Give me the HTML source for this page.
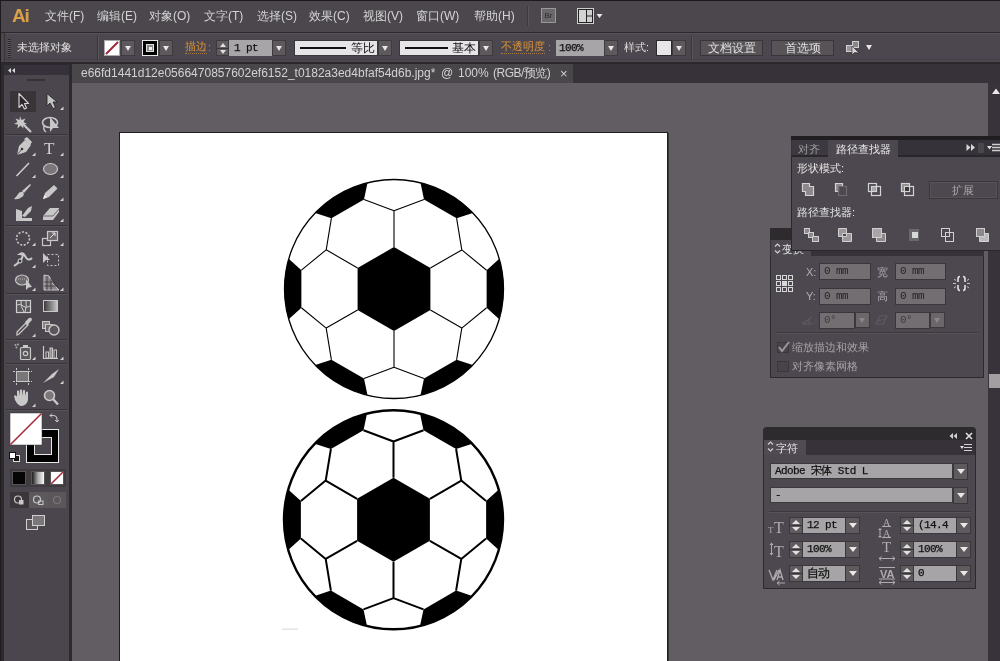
<!DOCTYPE html>
<html><head><meta charset="utf-8"><style>
*{margin:0;padding:0;box-sizing:border-box}
html,body{width:1000px;height:661px;overflow:hidden;}
body{will-change:transform;background:#4b474d;font-family:"Liberation Sans",sans-serif;}
.a{position:absolute}
#menubar{left:0;top:0;width:1000px;height:32px;background:#4b474d;border-top:1px solid #1c1b1c;}
#sep1{left:0;top:32px;width:1000px;height:1px;background:#2b292b}
#ctrl{left:4px;top:33px;width:996px;height:30px;background:#4c474e;border-left:1px solid #363336;box-shadow:inset 0 1px 0 #58535a, inset 0 -3px 0 #4c474e, inset 0 -4px 0 #433e45}
#sep2{left:0;top:62px;width:1000px;height:2px;background:#2c292c}
#tool{left:0;top:64px;width:72px;height:597px;background:#2d2a2d}
#toolin{left:4px;top:65px;width:65px;height:596px;background:#4b464d}
#toolhd{left:4px;top:65px;width:65px;height:10px;background:#36313a}
#tabs{left:72px;top:64px;width:928px;height:19px;background:#37323a}
#tab{left:72px;top:64px;width:501px;height:19px;background:#4a474a}
#canvas{left:72px;top:83px;width:916px;height:578px;background:#625d63}
#scroll{left:988px;top:83px;width:12px;height:578px;background:#38333b}
#thumb{left:989px;top:374px;width:11px;height:14px;background:#a29ea2}
#board{left:119px;top:132px;width:549px;height:540px;background:#fff;border:1px solid #1e1e1e;box-shadow:1px 1px 0 #3a373a}
.mt{color:#d4d4d4;font-size:12px;top:8px;white-space:nowrap}
#ai{left:12px;top:5px;font:bold 19px "Liberation Sans",sans-serif;color:#d9a04a;letter-spacing:-1.2px;line-height:22px}
#br{left:541px;top:8px;width:15px;height:15px;background:#6a686b;border:1px solid #9a989b;color:#2a292b;font:8px "Liberation Sans",sans-serif;line-height:13px;text-align:center}
#lay{left:577px;top:8px;width:17px;height:16px;border:1px solid #d8d8d8;background:#2e2d2f}
#lay i{position:absolute;background:#cfcfcf}
.tri{position:absolute;width:0;height:0;border-left:3.5px solid transparent;border-right:3.5px solid transparent;border-top:5px solid #e6e6e6}
.dd{width:14px;height:16px;background:#5d595d;border:1px solid #3e3b3e}
.dd .tri{left:2.5px;top:5px}
.ct{font-size:11px;white-space:nowrap;line-height:14px}
.or{color:#d8913c;border-bottom:1px dotted #a87a40;line-height:13px}
#grip{left:8px;top:39px;width:3px;height:19px;background:repeating-linear-gradient(#2a272a 0 1px,#5a565a 1px 2px)}
.vsep{top:36px;width:1px;height:24px;background:#3a373a;box-shadow:1px 0 0 #585458}
#fillsw{left:104px;top:40px;width:16px;height:16px;background:#fff;border:1px solid #aaa}
#fillsw svg{position:absolute;left:-1px;top:-1px}
#strokesw{left:142px;top:40px;width:16px;height:16px;background:#000;border:1px solid #e8e8e8}
#strokesw div{position:absolute;left:3px;top:3px;width:8px;height:8px;border:1px solid #e0e0e0;background:#8a8a8a}
#strokesw div:after{content:"";position:absolute;left:1.5px;top:1.5px;width:3px;height:3px;background:#f0f0f0}
.spin{width:13px;height:16px;background:#5f5b5f;border:1px solid #3e3b3e}
.spin .up{position:absolute;left:2.5px;top:2px;width:0;height:0;border-left:3.5px solid transparent;border-right:3.5px solid transparent;border-bottom:4px solid #e0e0e0}
.spin:after{content:"";position:absolute;left:0;top:6.5px;width:11px;height:1px;background:#3a363c}
.spin .dn{position:absolute;left:2.5px;top:9px;width:0;height:0;border-left:3.5px solid transparent;border-right:3.5px solid transparent;border-top:4px solid #e0e0e0}
.fld{-webkit-text-stroke:0.25px #111;height:16px;background:#a8a5a8;color:#111;font:11px "Liberation Mono",monospace;letter-spacing:-0.6px;line-height:16px;padding-left:5px;white-space:nowrap}
.sbox{top:40px;height:16px;background:#e6e4e6;border:1px solid #3a373a}
.sbox .ln{position:absolute;left:5px;top:6px;width:46px;height:2px;background:#111}
.sbox span{position:absolute;left:56px;top:0;font-size:12px;line-height:14px;color:#111}
.btn{top:40px;height:16px;background:#575357;border:1px solid #383538;color:#e0e0e0;font-size:12px;line-height:14px;text-align:center}
.tabt{top:66px;font-size:12px;color:#d2d2d2;white-space:nowrap;line-height:14px}
#tabx{left:560px;top:67px;font-size:13px;color:#d0d0d0;line-height:14px}
.pt{font-size:11px;line-height:14px;white-space:nowrap}
.pl{font-size:11px;line-height:14px;color:#b0adb0;white-space:nowrap}
.inp{height:17px;background:#726e72;border:1px solid #3a373a;color:#262426;font:11px "Liberation Mono",monospace;letter-spacing:-0.6px;line-height:15px;padding-left:4px;white-space:nowrap}
.inp.dis{color:#3e3b3e}
.ddp{width:15px;height:16px;background:#6a666a;border:1px solid #3c393c}
.ddp .tri{left:3px;top:5px;border-top-color:#8a868a}
.cb{width:12px;height:11px;background:#474347;border:1px solid #3a373a}
.finp{-webkit-text-stroke:0.25px #111;height:16px;background:#a7a4a7;border:1px solid #3c393c;color:#111;font:11px "Liberation Mono",monospace;letter-spacing:-0.6px;line-height:14px;padding-left:4px;white-space:nowrap}
.ddc{width:15px;height:17px;background:#5e5a5e;border:1px solid #3a373a}
.ddc .tri{left:3px;top:5px;border-left-width:4px;border-right-width:4px;border-top-width:5px;border-top-color:#e8e8e8}
.cinp{-webkit-text-stroke:0.25px #111;height:17px;background:#a7a4a7;border-top:1px solid #3c393c;border-bottom:1px solid #3c393c;color:#111;font:11px "Liberation Mono",monospace;letter-spacing:-0.6px;line-height:15px;padding-left:4px;white-space:nowrap}
.spn{width:14px;height:17px;background:#5e5a5e;border:1px solid #3a373a}
.spn:after{content:"";position:absolute;left:0;top:7px;width:12px;height:1px;background:#3a373a}
.spn i{position:absolute;left:2px;width:0;height:0;border-left:4px solid transparent;border-right:4px solid transparent}
.spn .u{top:2px;border-bottom:4px solid #e0e0e0}
.spn .d{top:9px;border-top:4px solid #e0e0e0}

#frame{left:0;top:0;width:1px;height:661px;background:#1e1c1e}

</style></head><body>
<div class="a" id="menubar"></div>
<div class="a" id="sep1"></div>
<div class="a" id="ctrl"></div>
<div class="a" id="sep2"></div>
<div class="a" id="tool"></div>
<div class="a" id="toolin"></div>
<div class="a" id="toolhd"></div>
<div class="a" id="tabs"></div>
<div class="a" id="tab"></div>
<div class="a" id="canvas"></div>
<div class="a" id="scroll"></div>
<div class="a" id="thumb"></div>
<div class="a" id="board"></div>
<svg class="a" style="left:0;top:0" width="1000" height="661" viewBox="0 0 1000 661">
<circle cx="394" cy="289" r="109.5" fill="#fff" stroke="#000" stroke-width="1.3"/>
<polygon points="394.0,247.0 430.4,268.0 430.4,310.0 394.0,331.0 357.6,310.0 357.6,268.0" fill="#000"/>
<path d="M331.4,218.2 L364.0,199.4 L367.5,182.8 A109.5,109.5 0 0 0 315.2,212.9 Z" fill="#000"/>
<path d="M424.0,199.4 L456.6,218.2 L472.8,212.9 A109.5,109.5 0 0 0 420.5,182.8 Z" fill="#000"/>
<path d="M486.6,270.2 L486.6,307.8 L499.3,319.2 A109.5,109.5 0 0 0 499.3,258.8 Z" fill="#000"/>
<path d="M456.6,359.8 L424.0,378.6 L420.5,395.2 A109.5,109.5 0 0 0 472.8,365.1 Z" fill="#000"/>
<path d="M364.0,378.6 L331.4,359.8 L315.2,365.1 A109.5,109.5 0 0 0 367.5,395.2 Z" fill="#000"/>
<path d="M301.4,307.8 L301.4,270.2 L288.7,258.8 A109.5,109.5 0 0 0 288.7,319.2 Z" fill="#000"/>
<path d="M394.0,247.0L394.0,210.7 M394.0,210.7L364.0,199.4 M394.0,210.7L424.0,199.4 M430.4,268.0L461.8,249.9 M461.8,249.9L456.6,218.2 M461.8,249.9L486.6,270.2 M430.4,310.0L461.8,328.1 M461.8,328.1L486.6,307.8 M461.8,328.1L456.6,359.8 M394.0,331.0L394.0,367.3 M394.0,367.3L424.0,378.6 M394.0,367.3L364.0,378.6 M357.6,310.0L326.2,328.1 M326.2,328.1L331.4,359.8 M326.2,328.1L301.4,307.8 M357.6,268.0L326.2,249.8 M326.2,249.8L301.4,270.2 M326.2,249.8L331.4,218.2" stroke="#000" stroke-width="1.1" fill="none"/>
<circle cx="393.5" cy="519.8" r="109.5" fill="#fff" stroke="#000" stroke-width="2.4"/>
<polygon points="393.5,477.8 429.9,498.8 429.9,540.8 393.5,561.8 357.1,540.8 357.1,498.8" fill="#000"/>
<path d="M330.9,449.0 L363.5,430.2 L367.0,413.6 A109.5,109.5 0 0 0 314.7,443.7 Z" fill="#000"/>
<path d="M423.5,430.2 L456.1,449.0 L472.3,443.7 A109.5,109.5 0 0 0 420.0,413.6 Z" fill="#000"/>
<path d="M486.1,501.0 L486.1,538.6 L498.8,550.0 A109.5,109.5 0 0 0 498.8,489.6 Z" fill="#000"/>
<path d="M456.1,590.6 L423.5,609.4 L420.0,626.0 A109.5,109.5 0 0 0 472.3,595.9 Z" fill="#000"/>
<path d="M363.5,609.4 L330.9,590.6 L314.7,595.9 A109.5,109.5 0 0 0 367.0,626.0 Z" fill="#000"/>
<path d="M300.9,538.6 L300.9,501.0 L288.2,489.6 A109.5,109.5 0 0 0 288.2,550.0 Z" fill="#000"/>
<path d="M393.5,477.8L393.5,441.5 M393.5,441.5L363.5,430.2 M393.5,441.5L423.5,430.2 M429.9,498.8L461.3,480.6 M461.3,480.6L456.1,449.0 M461.3,480.6L486.1,501.0 M429.9,540.8L461.3,558.9 M461.3,558.9L486.1,538.6 M461.3,558.9L456.1,590.6 M393.5,561.8L393.5,598.1 M393.5,598.1L423.5,609.4 M393.5,598.1L363.5,609.4 M357.1,540.8L325.7,558.9 M325.7,558.9L330.9,590.6 M325.7,558.9L300.9,538.6 M357.1,498.8L325.7,480.6 M325.7,480.6L300.9,501.0 M325.7,480.6L330.9,449.0" stroke="#000" stroke-width="2" fill="none"/>
<rect x="282" y="628.5" width="16" height="1.5" fill="#e4e4e4"/>
</svg>
<svg class="a" style="left:0;top:0" width="72" height="661" viewBox="0 0 72 661">
<g fill="none" stroke="#37323a" stroke-width="1">
<line x1="6" y1="134.5" x2="67" y2="134.5"/><line x1="6" y1="225.5" x2="67" y2="225.5"/><line x1="6" y1="293.5" x2="67" y2="293.5"/>
<line x1="6" y1="339.5" x2="67" y2="339.5"/><line x1="6" y1="363.5" x2="67" y2="363.5"/><line x1="6" y1="409.5" x2="67" y2="409.5"/>
</g>
<g fill="none" stroke="#555155" stroke-width="1">
<line x1="6" y1="135.5" x2="67" y2="135.5"/><line x1="6" y1="226.5" x2="67" y2="226.5"/><line x1="6" y1="294.5" x2="67" y2="294.5"/>
<line x1="6" y1="340.5" x2="67" y2="340.5"/><line x1="6" y1="364.5" x2="67" y2="364.5"/><line x1="6" y1="410.5" x2="67" y2="410.5"/>
</g>
<!-- header arrows -->
<path d="M8 70.5 L11 68 L11 73 Z M12 70.5 L15 68 L15 73 Z" fill="#d8d8d8"/>
<rect x="27" y="79" width="18" height="2" fill="#2a272a"/><path d="M28 79 V81 M30 79 V81 M32 79 V81 M34 79 V81 M36 79 V81 M38 79 V81 M40 79 V81 M42 79 V81 M44 79 V81" stroke="#48434a" stroke-width="0.8"/>
<!-- selected bg -->
<rect x="10" y="91" width="26" height="21" fill="#383438"/>
<!-- selection arrow outline -->
<path d="M19 93.5 L19 107.5 L22 104.5 L24.5 109 L26.5 108 L24.5 103.5 L28.5 103.5 Z" fill="#2a262a" stroke="#cfcfcf" stroke-width="1.2" stroke-linejoin="round"/>
<!-- direct selection -->
<path d="M47 93.5 L47 106 L50 103 L53 108.5 L55.5 107.5 L53 102 L57 102 Z" fill="#c4c4c4" stroke="#222" stroke-width="0.8"/>
<g fill="#d0d0d0">
<path d="M60 110 L63.5 106.5 L63.5 110 Z"/>
<path d="M32 156 L35.5 152.5 L35.5 156 Z"/><path d="M60 156 L63.5 152.5 L63.5 156 Z"/>
<path d="M32 178 L35.5 174.5 L35.5 178 Z"/><path d="M60 178 L63.5 174.5 L63.5 178 Z"/>
<path d="M60 201 L63.5 197.5 L63.5 201 Z"/>
<path d="M60 222 L63.5 218.5 L63.5 222 Z"/>
<path d="M32 246 L35.5 242.5 L35.5 246 Z"/><path d="M60 246 L63.5 242.5 L63.5 246 Z"/>
<path d="M32 268 L35.5 264.5 L35.5 268 Z"/>
<path d="M32 291 L35.5 287.5 L35.5 291 Z"/><path d="M60 291 L63.5 287.5 L63.5 291 Z"/>
<path d="M32 337 L35.5 333.5 L35.5 337 Z"/>
<path d="M32 360 L35.5 356.5 L35.5 360 Z"/><path d="M60 360 L63.5 356.5 L63.5 360 Z"/>
<path d="M60 384 L63.5 380.5 L63.5 384 Z"/>
<path d="M32 407 L35.5 403.5 L35.5 407 Z"/>
</g>
<!-- magic wand -->
<path d="M20 116 L21.5 120 L25.5 118.5 L23.5 122 L27 124 L23 124.5 L23.5 128.5 L20.5 125.5 L17.5 128.5 L18 124.5 L14 124 L17.5 122 L15.5 118.5 L19.5 120 Z" fill="#c8c8c8"/>
<line x1="22" y1="123" x2="31" y2="132" stroke="#c8c8c8" stroke-width="2.2"/>
<!-- lasso -->
<ellipse cx="50" cy="122.5" rx="7.5" ry="5" fill="none" stroke="#c8c8c8" stroke-width="1.6"/>
<path d="M50 117 L50 132 L53 128 L59 128 Z" fill="#c8c8c8"/>
<path d="M44 126 Q43 130 46 132" fill="none" stroke="#c8c8c8" stroke-width="1.4"/>
<!-- pen -->
<path d="M17 155 L19 146 L25 140 L31 145 L26 152 Z" fill="#c8c8c8"/>
<path d="M24 139 L27 137 L32 142 L30 145 Z" fill="#c8c8c8"/>
<circle cx="22" cy="149" r="1.3" fill="#3a363a"/><line x1="17" y1="155" x2="22" y2="149" stroke="#3a363a" stroke-width="0.8"/>
<!-- type T -->
<text x="44" y="154" font-family="Liberation Serif" font-size="17" fill="#cfcfcf">T</text>
<!-- line -->
<line x1="16.5" y1="176" x2="29" y2="163" stroke="#cfcfcf" stroke-width="1.5"/>
<!-- ellipse -->
<ellipse cx="50.5" cy="169" rx="7" ry="5.5" fill="#7a767a" stroke="#c8c8c8" stroke-width="1.2"/>
<!-- brush -->
<path d="M22 191 L30 184 L31 185 L24 193 Z" fill="#c8c8c8"/>
<path d="M14 199 Q17 196 18 194 Q20 191 23 192 Q25 195 22 197 Q18 200 14 199 Z" fill="#c8c8c8"/>
<!-- pencil -->
<path d="M43 199 L45 193 L54 185 L57.5 188.5 L49 197 Z" fill="#c8c8c8"/><path d="M43 199 L44.5 195 L47 197.5 Z" fill="#eee"/>
<!-- blob brush -->
<path d="M16 209 L22 211 L22 218 L32 218 L32 221 L16 221 Z" fill="#c8c8c8"/>
<path d="M22 216 L28 208 L32 206 L31 211 L25 217 Z" fill="#c8c8c8"/>
<!-- eraser -->
<path d="M43 216 L50 208 L59 208 L59 212 L53 220 L43 220 Z" fill="#c8c8c8"/><path d="M43 216 L53 216 L59 209" fill="none" stroke="#6a666a" stroke-width="1"/>
<!-- rotate -->
<circle cx="23" cy="238.5" r="6.5" fill="none" stroke="#c8c8c8" stroke-width="1.6" stroke-dasharray="2 1.6"/>
<!-- scale -->
<rect x="42.5" y="238.5" width="8" height="7" fill="none" stroke="#c8c8c8" stroke-width="1.2"/>
<rect x="47.5" y="231.5" width="10" height="9" fill="#6a666a" stroke="#c8c8c8" stroke-width="1.2"/>
<path d="M50 238 L55 233 M52 233 L55 233 L55 236" stroke="#e0e0e0" stroke-width="1" fill="none"/>
<!-- warp -->
<path d="M14 266 Q20 262 22 258 Q24 254 20 254 Q23 252 25 256 Q28 262 32 258" fill="none" stroke="#c8c8c8" stroke-width="2"/>
<circle cx="20" cy="261" r="2" fill="#3a363a" stroke="#e0e0e0" stroke-width="1"/>
<!-- free transform -->
<rect x="47.5" y="254.5" width="11" height="11" fill="none" stroke="#c8c8c8" stroke-width="1" stroke-dasharray="2 2"/>
<path d="M43 253 L43 263 L46 260 L50 260 Z" fill="#c8c8c8"/>
<!-- shape builder -->
<ellipse cx="22" cy="280" rx="6.5" ry="5" fill="#6c686c" stroke="#c8c8c8" stroke-width="1.2"/>
<path d="M26 279 L26 290 L28.5 287.5 L32 287 Z" fill="#c8c8c8"/>
<line x1="16" y1="279" x2="25" y2="279" stroke="#c8c8c8" stroke-width="0.8" stroke-dasharray="1 1"/>
<!-- perspective grid -->
<path d="M44 275 L44 290 L59 290 Q52 285 49 276 Z" fill="#8a868a" stroke="#c8c8c8" stroke-width="1"/>
<path d="M47 276 L47 290 M51 279 L51 290 M44 282 L55 282 M44 286 L58 286" stroke="#3a363a" stroke-width="0.8"/>
<!-- mesh -->
<rect x="16.5" y="300.5" width="14" height="12" fill="#5a565a" stroke="#d0d0d0" stroke-width="1.2"/>
<path d="M17 305 Q21 303 23 306 Q26 309 30 306 M21 301 Q20 306 24 312 M26 301 Q27 306 25 312" fill="none" stroke="#d0d0d0" stroke-width="1"/>
<!-- gradient -->
<defs><linearGradient id="gr" x1="0" x2="1"><stop offset="0" stop-color="#3a373a"/><stop offset="1" stop-color="#c8c8c8"/></linearGradient>
<linearGradient id="gr2" x1="0" x2="1"><stop offset="0" stop-color="#111"/><stop offset="0.5" stop-color="#aaa"/><stop offset="1" stop-color="#fff"/></linearGradient></defs>
<rect x="43.5" y="300.5" width="14" height="11" fill="url(#gr)" stroke="#c8c8c8" stroke-width="1"/>
<!-- eyedropper -->
<path d="M17 335 L17 332 L26 323 L28 325 L19 334 Z" fill="none" stroke="#c8c8c8" stroke-width="1.3"/>
<path d="M25 322 L29 318 Q31 317 32 319 Q32 321 30 322 L27 326 Z" fill="#c8c8c8"/>
<!-- blend -->
<rect x="42.5" y="321.5" width="7" height="7" fill="#8a868a" stroke="#c8c8c8" stroke-width="1"/>
<rect x="45.5" y="324.5" width="7" height="7" fill="#6a666a" stroke="#c8c8c8" stroke-width="1"/>
<circle cx="54" cy="330" r="5" fill="#5a565a" stroke="#c8c8c8" stroke-width="1.4"/>
<!-- symbol sprayer -->
<rect x="20.5" y="347.5" width="10" height="12" rx="1" fill="#5a565a" stroke="#c8c8c8" stroke-width="1.2"/>
<rect x="23" y="345" width="5" height="3" fill="#c8c8c8"/><circle cx="25.5" cy="353.5" r="2.2" fill="none" stroke="#c8c8c8" stroke-width="1.2"/>
<circle cx="15.5" cy="345" r="1" fill="#aaa"/><circle cx="18" cy="344.5" r="1" fill="#aaa"/><circle cx="16.5" cy="347.5" r="1" fill="#aaa"/>
<!-- graph -->
<path d="M43.5 346 L43.5 358.5 L58 358.5" fill="none" stroke="#c8c8c8" stroke-width="1.2"/>
<rect x="46" y="352" width="2.5" height="6" fill="none" stroke="#c8c8c8" stroke-width="1"/><rect x="50" y="348" width="2.5" height="10" fill="#8a868a" stroke="#c8c8c8" stroke-width="1"/><rect x="54" y="350" width="2.5" height="8" fill="none" stroke="#c8c8c8" stroke-width="1"/>
<!-- artboard -->
<rect x="16.5" y="371.5" width="12" height="10" fill="#7a767a" stroke="#c8c8c8" stroke-width="1"/>
<path d="M13 371.5 H32 M13 381.5 H32 M16.5 368 V385 M28.5 368 V385" stroke="#c8c8c8" stroke-width="1" stroke-dasharray="2 1"/>
<!-- slice -->
<path d="M43 383 L52 374 L59 369 L54 377 Z" fill="#c8c8c8"/>
<!-- hand -->
<path d="M17 397 L17 391 Q18 389.5 19 391 L19 396 L20 390 Q21 388.5 22 390 L22 396 L23 390.5 Q24 389 25 390.5 L25 396 L26 392 Q27 391 28 392 L28 400 Q27 405 22 406 Q18 406 15 400 L14 396 Q15 394.5 16.5 396 Z" fill="#c8c8c8"/>
<!-- zoom -->
<circle cx="49.5" cy="395.5" r="5" fill="#7a767a" stroke="#c8c8c8" stroke-width="1.6"/>
<line x1="53" y1="399" x2="58" y2="404.5" stroke="#c8c8c8" stroke-width="2.4"/>
<!-- fill / stroke -->
<rect x="26.5" y="429.5" width="32" height="33" fill="#000" stroke="#e8e8e8" stroke-width="1"/>
<rect x="34.5" y="437.5" width="17" height="17" fill="#4b464d" stroke="#e8e8e8" stroke-width="1"/>
<rect x="10" y="413" width="32" height="32" fill="#fff" stroke="#3a363a" stroke-width="0.5"/>
<line x1="10.5" y1="444.5" x2="41.5" y2="413.5" stroke="#a82c3c" stroke-width="1.6"/>
<path d="M50 415.5 L53 415.5 Q57 415.5 57 419.5 L57 422" fill="none" stroke="#c8c8c8" stroke-width="1.1"/>
<path d="M50 415.5 L52 413.5 M50 415.5 L52 417.5 M57 422 L55 420 M57 422 L59 420" stroke="#c8c8c8" stroke-width="1"/>
<rect x="13.5" y="455.5" width="6" height="6" fill="#111" stroke="#ddd" stroke-width="1"/>
<rect x="9.5" y="452.5" width="6" height="6" fill="#fff" stroke="#111" stroke-width="1"/>
<!-- color/gradient/none -->
<rect x="10" y="469" width="56" height="18" fill="#3f3b3f"/>
<rect x="12.5" y="471.5" width="13" height="13" fill="#050505" stroke="#555" stroke-width="1"/>
<rect x="31.5" y="471.5" width="13" height="13" fill="url(#gr2)" stroke="#555" stroke-width="1"/>
<rect x="50.5" y="471.5" width="13" height="13" fill="#fff" stroke="#555" stroke-width="1"/>
<line x1="51" y1="484" x2="63" y2="472" stroke="#a82c3c" stroke-width="1.6"/>
<!-- draw modes -->
<rect x="10" y="492" width="19" height="16" fill="#3a363a"/>
<rect x="29" y="492" width="19" height="16" fill="#5c585c"/>
<rect x="48" y="492" width="18" height="16" fill="#5a565a"/>
<circle cx="18" cy="499.5" r="3.5" fill="none" stroke="#c8c8c8" stroke-width="1.2"/><rect x="19" y="500" width="4.5" height="4.5" fill="#c8c8c8"/>
<circle cx="37" cy="499.5" r="3.5" fill="none" stroke="#c8c8c8" stroke-width="1.2"/><rect x="38.5" y="501" width="4.5" height="3.5" fill="none" stroke="#c8c8c8" stroke-width="1"/>
<circle cx="57" cy="500" r="3.5" fill="none" stroke="#7a767a" stroke-width="1.2"/>
<!-- screen mode -->
<rect x="26.5" y="519.5" width="11" height="10" fill="#5a565a" stroke="#d0d0d0" stroke-width="1"/>
<rect x="32.5" y="515.5" width="12" height="10" fill="#7a767a" stroke="#d0d0d0" stroke-width="1"/>
</svg>

<!-- Transform panel (P2) -->
<div class="a" style="left:770px;top:228px;width:214px;height:150px;background:#4d484f;border:1px solid #2c292c"></div>
<div class="a" style="left:770px;top:228px;width:214px;height:12px;background:#2e2b2e"></div>
<div class="a" style="left:770px;top:240px;width:214px;height:16px;background:#37323a"></div>
<div class="a" style="left:771px;top:240px;width:40px;height:16px;background:#4d484f"></div>
<svg class="a" style="left:770px;top:228px" width="214" height="150">
<path d="M5 18.5 L7.5 16 L10 18.5 M5 22.5 L7.5 25 L10 22.5" fill="none" stroke="#d0d0d0" stroke-width="1.2"/>
</svg>
<div class="a pt" style="left:782px;top:242px;color:#e0e0e0">变换</div>
<svg class="a" style="left:775px;top:274px" width="20" height="20">
<g fill="none" stroke="#d8d8d8" stroke-width="1"><rect x="1.5" y="1.5" width="4" height="4"/><rect x="7.5" y="1.5" width="4" height="4"/><rect x="13.5" y="1.5" width="4" height="4"/>
<rect x="1.5" y="7.5" width="4" height="4"/><rect x="13.5" y="7.5" width="4" height="4"/>
<rect x="1.5" y="13.5" width="4" height="4"/><rect x="7.5" y="13.5" width="4" height="4"/><rect x="13.5" y="13.5" width="4" height="4"/></g>
<rect x="7" y="7" width="5" height="5" fill="#d8d8d8"/>
</svg>
<div class="a pl" style="left:806px;top:265px">X:</div>
<div class="a inp" style="left:819px;top:263px;width:52px">0 mm</div>
<div class="a pl" style="left:877px;top:265px">宽</div>
<div class="a inp" style="left:895px;top:263px;width:51px">0 mm</div>
<div class="a pl" style="left:806px;top:289px">Y:</div>
<div class="a inp" style="left:819px;top:288px;width:52px">0 mm</div>
<div class="a pl" style="left:877px;top:289px">高</div>
<div class="a inp" style="left:895px;top:288px;width:51px">0 mm</div>
<svg class="a" style="left:953px;top:275px" width="18" height="17">
<path d="M7 1.5 Q5 1.5 5 4 L5 7 M7 15.5 Q5 15.5 5 13 L5 10 M10 1.5 Q12 1.5 12 4 L12 7 M10 15.5 Q12 15.5 12 13 L12 10" fill="none" stroke="#e0e0e0" stroke-width="1.6"/>
<path d="M0 8.5 H3 M14 8.5 H17 M1 4 L3 5.5 M16 4 L14 5.5 M1 13 L3 11.5 M16 13 L14 11.5" stroke="#c0c0c0" stroke-width="1"/>
</svg>
<svg class="a" style="left:800px;top:313px" width="20" height="14"><path d="M2 11 L12 4 M2 11 L13 11 M8 8 Q10 9 9 11" fill="none" stroke="#5e5a5e" stroke-width="1.2"/><circle cx="16" cy="7" r="0.8" fill="#5e5a5e"/><circle cx="16" cy="10" r="0.8" fill="#5e5a5e"/></svg>
<div class="a inp dis" style="left:819px;top:312px;width:36px">0°</div>
<div class="a ddp" style="left:855px;top:312px"><div class="tri"></div></div>
<svg class="a" style="left:873px;top:313px" width="20" height="14"><path d="M3 11 L7 3 L14 3 L10 11 Z M5 8 L12 6" fill="none" stroke="#5e5a5e" stroke-width="1.2"/></svg>
<div class="a inp dis" style="left:895px;top:312px;width:35px">0°</div>
<div class="a ddp" style="left:930px;top:312px"><div class="tri"></div></div>
<div class="a" style="left:776px;top:332px;width:202px;height:1px;background:#3c393c"></div>
<div class="a" style="left:776px;top:333px;width:202px;height:1px;background:#575357"></div>
<div class="a cb" style="left:777px;top:342px"></div>
<svg class="a" style="left:777px;top:340px" width="14" height="14"><path d="M2 7 L5 11 L12 2" fill="none" stroke="#9a969a" stroke-width="2"/></svg>
<div class="a pt" style="left:792px;top:340px;color:#a6a3a6">缩放描边和效果</div>
<div class="a cb" style="left:777px;top:361px"></div>
<div class="a pt" style="left:792px;top:359px;color:#a6a3a6">对齐像素网格</div>

<!-- Pathfinder panel (P1) -->
<div class="a" style="left:791px;top:136px;width:209px;height:115px;background:#4d484f;border-left:1px solid #2a272a;border-bottom:1px solid #2a272a"></div>
<div class="a" style="left:791px;top:136px;width:209px;height:4px;background:#201e21"></div>
<div class="a" style="left:791px;top:140px;width:209px;height:15px;background:#36323a"></div>
<div class="a" style="left:791px;top:155px;width:209px;height:2px;background:#2a272b"></div>
<div class="a" style="left:792px;top:140px;width:36px;height:15px;background:#3d3940"></div>
<div class="a" style="left:828px;top:140px;width:70px;height:17px;background:#4d484f"></div>
<div class="a pt" style="left:798px;top:142px;color:#9e9b9e">对齐</div>
<div class="a pt" style="left:836px;top:142px;color:#e8e8e8">路径查找器</div>
<svg class="a" style="left:960px;top:140px" width="40" height="17">
<path d="M6.5 4 L10.5 7.5 L6.5 11 Z M11 4 L15 7.5 L11 11 Z" fill="#d8d8d8"/>
<rect x="18" y="3" width="6" height="10" fill="#4a474b"/>
<path d="M27 6 L32 6 L29.5 9.5 Z" fill="#e0e0e0"/>
<path d="M32 4.5 H40 M32 7.5 H40 M32 10.5 H40" stroke="#cfcfcf" stroke-width="1.4"/>
</svg>
<div class="a pt" style="left:797px;top:161px;color:#e4e4e4">形状模式:</div>
<div class="a pt" style="left:797px;top:205px;color:#e4e4e4">路径查找器:</div>
<svg class="a" style="left:791px;top:157px" width="209" height="94">
<g stroke="#d4d4d4" stroke-width="1.2">
<!-- unite -->
<path d="M11.5 26.5 H18.5 V29.5 H22.5 V38.5 H14.5 V34.5 H11.5 Z" fill="#8c888c"/>
<!-- minus front -->
<path d="M44.5 26.5 H51.5 V29.5 H47.5 V34.5 H44.5 Z" fill="#8c888c"/>
<path d="M47.5 29.5 H55.5 V38.5 H47.5 Z" fill="none" stroke="#6e6a6e"/>
<!-- intersect -->
<rect x="77.5" y="26.5" width="8" height="8" fill="none"/><rect x="80.5" y="29.5" width="9" height="9" fill="none"/>
<rect x="81" y="30" width="4" height="4" fill="#a8a4a8" stroke="none"/>
<!-- exclude -->
<rect x="110.5" y="26.5" width="8" height="8" fill="#8c888c"/><rect x="113.5" y="29.5" width="9" height="9" fill="none"/>
<rect x="114" y="30" width="4" height="4" fill="#3c393c" stroke="none"/>
</g>
<g stroke="#d0d0d0" stroke-width="1">
<!-- divide -->
<rect x="13.5" y="71.5" width="5" height="5" fill="#8c888c"/><rect x="17.5" y="75.5" width="5" height="5" fill="#8c888c"/><rect x="21.5" y="79.5" width="6" height="5" fill="#8c888c"/>
<!-- trim -->
<path d="M47.5 71.5 H55.5 V76.5 H51.5 V79.5 H47.5 Z" fill="#9c989c"/><path d="M55.5 76.5 H60.5 V84.5 H51.5 V79.5 H55.5 Z" fill="#9c989c"/>
<!-- merge -->
<rect x="81.5" y="71.5" width="9" height="9" fill="#a8a4a8"/><path d="M90.5 76.5 H94.5 V84.5 H85.5 V80.5 H90.5 Z" fill="#8c888c"/>
<!-- crop -->
<rect x="118" y="72" width="10" height="12" fill="#6a666a" stroke="none"/><rect x="121" y="75" width="6" height="6" fill="#d8d8d8" stroke="none"/>
<!-- outline -->
<rect x="150.5" y="71.5" width="8" height="8" fill="none"/><rect x="154.5" y="75.5" width="8" height="9" fill="none"/>
<!-- minus back -->
<rect x="185.5" y="71.5" width="8" height="8" fill="#8c888c"/><path d="M193.5 76.5 H197.5 V84.5 H188.5 V79.5 H193.5 Z" fill="#bcb8bc"/>
</g>
</svg>
<div class="a" style="left:929px;top:181px;width:69px;height:18px;border:1px solid #3a373a;background:#4d484f;box-shadow:inset 0 0 0 1px #575357"></div>
<div class="a pt" style="left:952px;top:183px;color:#a9a6a9">扩展</div>

<!-- Character panel (P3) -->
<div class="a" style="left:763px;top:427px;width:213px;height:162px;background:#4d484f;border:1px solid #2c292c;border-radius:4px 4px 0 0"></div>
<div class="a" style="left:763px;top:427px;width:213px;height:13px;background:#2e2b2e;border-radius:4px 4px 0 0"></div>
<div class="a" style="left:764px;top:440px;width:211px;height:15px;background:#37323a"></div>
<div class="a" style="left:764px;top:440px;width:42px;height:15px;background:#504b52"></div>
<svg class="a" style="left:763px;top:427px" width="213" height="30">
<path d="M5 17.5 L7.5 15 L10 17.5 M5 21.5 L7.5 24 L10 21.5" fill="none" stroke="#d0d0d0" stroke-width="1.2"/>
<path d="M190 6 L186.5 9 L190 12 Z M194 6 L190.5 9 L194 12 Z" fill="#d0d0d0"/>
<path d="M203 6 L209 12 M209 6 L203 12" stroke="#e0e0e0" stroke-width="1.6"/>
<path d="M197 19 L201 19 L199 22 Z" fill="#e0e0e0"/>
<path d="M201 17.5 H209 M201 20.5 H209 M201 23.5 H209" stroke="#d0d0d0" stroke-width="1.2"/>
</svg>
<div class="a pt" style="left:776px;top:441px;color:#e8e8e8">字符</div>
<div class="a finp" style="left:770px;top:463px;width:183px;">Adobe 宋体 Std L</div>
<div class="a ddc" style="left:953px;top:463px"><div class="tri"></div></div>
<div class="a finp" style="left:770px;top:487px;width:183px">-</div>
<div class="a ddc" style="left:953px;top:487px"><div class="tri"></div></div>
<div class="a" style="left:769px;top:511px;width:202px;height:1px;background:#3c393c"></div>
<div class="a" style="left:769px;top:512px;width:202px;height:1px;background:#575357"></div>
<!-- rows -->
<div class="a spn" style="left:789px;top:517px"><i class="u"></i><i class="d"></i></div>
<div class="a cinp" style="left:803px;top:517px;width:42px">12 pt</div>
<div class="a ddc" style="left:845px;top:517px"><div class="tri"></div></div>
<div class="a spn" style="left:789px;top:541px"><i class="u"></i><i class="d"></i></div>
<div class="a cinp" style="left:803px;top:541px;width:42px">100%</div>
<div class="a ddc" style="left:845px;top:541px"><div class="tri"></div></div>
<div class="a spn" style="left:789px;top:565px"><i class="u"></i><i class="d"></i></div>
<div class="a cinp" style="left:803px;top:565px;width:42px;font-family:'Liberation Sans',sans-serif;font-size:12px">自动</div>
<div class="a ddc" style="left:845px;top:565px"><div class="tri"></div></div>
<div class="a spn" style="left:900px;top:517px"><i class="u"></i><i class="d"></i></div>
<div class="a cinp" style="left:914px;top:517px;width:42px">(14.4</div>
<div class="a ddc" style="left:956px;top:517px"><div class="tri"></div></div>
<div class="a spn" style="left:900px;top:541px"><i class="u"></i><i class="d"></i></div>
<div class="a cinp" style="left:914px;top:541px;width:42px">100%</div>
<div class="a ddc" style="left:956px;top:541px"><div class="tri"></div></div>
<div class="a spn" style="left:900px;top:565px"><i class="u"></i><i class="d"></i></div>
<div class="a cinp" style="left:914px;top:565px;width:42px">0</div>
<div class="a ddc" style="left:956px;top:565px"><div class="tri"></div></div>
<svg class="a" style="left:763px;top:512px" width="213" height="76">
<g fill="#aeabae" font-family="Liberation Serif">
<text x="11" y="20.5" font-size="16">T</text><text x="5" y="20.5" font-size="9">T</text>
<text x="11" y="45" font-size="16">T</text>
<path d="M6.5 33 L8.5 30.5 L10.5 33 Z M6.5 41 L8.5 43.5 L10.5 41 Z"/><rect x="8" y="32" width="1" height="10"/>
<path d="M6 58 L10 68 L14 58 M11 68 L16 58 M14 68 L17 58 L20 68 M15 65 L19 65" fill="none" stroke="#aeabae" stroke-width="1.3"/>
<path d="M14 71 H22 M14 71 L16.5 69 M14 71 L16.5 73" stroke="#aeabae" stroke-width="1" fill="none"/>
<text x="120" y="14" font-size="10">A</text><text x="120" y="25" font-size="10">A</text>
<rect x="119" y="14" width="9" height="1"/><rect x="119" y="25" width="9" height="1"/>
<path d="M115 18 L117 16 L119 18 Z M115 24 L117 26 L119 24 Z"/><rect x="116.5" y="17" width="1" height="8"/>
<text x="119" y="40" font-size="15">T</text>
<path d="M116 46.5 H132 M116 46.5 L118.5 44.5 M116 46.5 L118.5 48.5 M132 46.5 L129.5 44.5 M132 46.5 L129.5 48.5" stroke="#aeabae" stroke-width="1" fill="none"/>
<rect x="116" y="55" width="16" height="1" fill="#aeabae"/>
<text x="117" y="66" font-size="11" font-family="Liberation Sans" font-weight="bold" fill="#aeabae">VA</text>
<rect x="116" y="66.5" width="16" height="1" fill="#aeabae"/>
<path d="M116 70.5 H132 M116 70.5 L118.5 68.5 M116 70.5 L118.5 72.5 M132 70.5 L129.5 68.5 M132 70.5 L129.5 72.5" stroke="#aeabae" stroke-width="1" fill="none"/>
</g>
</svg>

<div class="a" id="frame"></div>
<!-- menu -->
<div class="a" id="ai">Ai</div>
<div class="a mt" style="left:45px">文件(F)</div>
<div class="a mt" style="left:97px">编辑(E)</div>
<div class="a mt" style="left:149px">对象(O)</div>
<div class="a mt" style="left:204px">文字(T)</div>
<div class="a mt" style="left:257px">选择(S)</div>
<div class="a mt" style="left:309px">效果(C)</div>
<div class="a mt" style="left:363px">视图(V)</div>
<div class="a mt" style="left:416px">窗口(W)</div>
<div class="a mt" style="left:474px">帮助(H)</div>
<div class="a" style="left:527px;top:6px;width:1px;height:20px;background:#3a393b"></div>
<div class="a" style="left:528px;top:6px;width:1px;height:20px;background:#565557"></div>
<div class="a" id="br">Br</div>
<svg class="a" style="left:576px;top:7px" width="30" height="18">
<rect x="1.5" y="1.5" width="16" height="15" fill="#222" stroke="#cfcfcf" stroke-width="1"/>
<rect x="3" y="3" width="7" height="12" fill="#d4d4d4"/>
<rect x="11" y="3" width="5" height="5.5" fill="#cfcfcf"/><rect x="11" y="9.5" width="5" height="5.5" fill="#cfcfcf"/>
<path d="M20.5 7 L26.5 7 L23.5 11 Z" fill="#e8e8e8"/>
</svg>
<svg class="a" style="left:988px;top:83px" width="12" height="14"><path d="M4 11 L12 11 L8 5.5 Z" fill="#e8e8e8"/></svg>
<!-- control bar -->
<div class="a" id="grip"></div>
<div class="a ct" style="left:17px;top:40px;color:#e0e0e0">未选择对象</div>
<div class="a vsep" style="left:97px"></div>
<div class="a" id="fillsw"><svg width="16" height="16"><line x1="2" y1="14" x2="14" y2="2" stroke="#9e2838" stroke-width="2"/></svg></div>
<div class="a dd" style="left:121px;top:40px"><div class="tri"></div></div>
<div class="a" id="strokesw"><div></div></div>
<div class="a dd" style="left:159px;top:40px"><div class="tri"></div></div>
<div class="a ct or" style="left:185px;top:40px">描边</div>
<div class="a ct" style="left:208px;top:40px;color:#9a8a70">:</div>
<div class="a spin" style="left:216px;top:40px"><div class="up"></div><div class="dn"></div></div>
<div class="a fld" style="left:229px;top:40px;width:43px;">1 pt</div>
<div class="a dd" style="left:272px;top:40px"><div class="tri"></div></div>
<div class="a sbox" style="left:294px;width:84px"><div class="ln"></div><span>等比</span></div>
<div class="a dd" style="left:378px;top:40px"><div class="tri"></div></div>
<div class="a sbox" style="left:399px;width:80px"><div class="ln" style="width:43px"></div><span style="left:52px">基本</span></div>
<div class="a dd" style="left:479px;top:40px"><div class="tri"></div></div>
<div class="a ct or" style="left:501px;top:40px">不透明度</div>
<div class="a ct" style="left:548px;top:40px;color:#9a8a70">:</div>
<div class="a fld" style="left:556px;top:40px;width:48px;padding-left:3px">100%</div>
<div class="a dd" style="left:604px;top:40px"><div class="tri"></div></div>
<div class="a ct" style="left:624px;top:40px;color:#ddd">样式:</div>
<div class="a" style="left:656px;top:40px;width:16px;height:16px;background:#e8e6e8;border:1px solid #2a282a"></div>
<div class="a dd" style="left:672px;top:40px"><div class="tri"></div></div>
<div class="a vsep" style="left:691px"></div>
<div class="a btn" style="left:700px;width:63px">文档设置</div>
<div class="a btn" style="left:771px;width:63px">首选项</div>
<svg class="a" style="left:844px;top:39px" width="32" height="18">
<rect x="2.5" y="6.5" width="6" height="6" fill="#9a969a" stroke="#d0d0d0" stroke-width="1"/>
<rect x="8.5" y="2.5" width="6" height="6" fill="#8a868a" stroke="#d0d0d0" stroke-width="1"/>
<path d="M8 7 L8 16 L10.5 13.5 L15 14 Z" fill="#d8d8d8" stroke="#2a272a" stroke-width="0.6"/>
<path d="M22 6 L28 6 L25 11 Z" fill="#e8e8e8"/>
</svg>
<!-- tab -->
<div class="a tabt" style="left:81px">e66fd1441d12e0566470857602ef6152_t0182a3ed4bfaf54d6b.jpg*</div><div class="a tabt" style="left:441px">@</div><div class="a tabt" style="left:458px">100%</div><div class="a tabt" style="left:493px;letter-spacing:-0.5px">(RGB/预览)</div>
<div class="a" id="tabx">×</div>

</body></html>
